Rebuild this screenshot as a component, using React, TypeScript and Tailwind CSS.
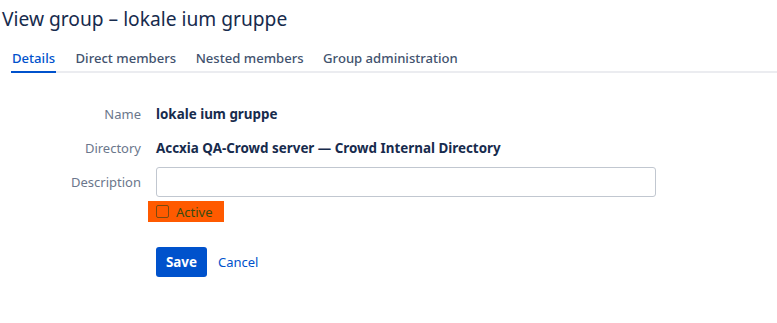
export default function App() {
  const tabs = ["Details", "Direct members", "Nested members", "Group administration"];

  return (
    <div className="w-[777px] h-[323px] bg-white text-[#172b4d] font-['Noto_Sans',sans-serif] overflow-hidden">
      <h1 className="pl-[2px] pt-[5px] text-[19.2px] leading-[28px] text-[#172b4d]">
        View group – lokale ium gruppe
      </h1>

      <div className="mt-[15px] ml-[11px] flex border-b-2 border-[#ebecf0]">
        {tabs.map((tab, i) => (
          <div
            key={tab}
            className={
              i === 0
                ? "mb-[-2px] border-b-2 border-[#0052cc] px-[1px] pb-[3px] text-[13.1px] leading-[20px] font-medium text-[#0052cc]"
                : "ml-[19.5px] pb-[3px] text-[13.1px] leading-[20px] font-medium text-[#42526e]"
            }
          >
            {tab}
          </div>
        ))}
      </div>

      <div className="mt-[30px] flex flex-col">
        <Row label="Name">
          <span className="font-bold text-[13.4px]">lokale ium gruppe</span>
        </Row>
        <div className="h-[13px]" />
        <Row label="Directory">
          <span className="font-bold text-[13.4px]">
            Accxia QA-Crowd server — Crowd Internal Directory
          </span>
        </Row>
        <div className="h-[9px]" />
        <Row label="Description">
          <input className="block h-[30px] w-[500px] rounded-[3px] border border-[#c1c7d0] bg-white outline-none" />
        </Row>

        <div className="ml-[148px] mt-[4px] flex h-[21px] w-[76px] items-center bg-[#ff5a00] pl-[8px] text-[13px] leading-[20px] text-[#3a4a10]">
          <span className="h-[13px] w-[13px] rounded-[2px] border border-[#7a4a10]" />
          <span className="ml-[7px]">Active</span>
        </div>

        <div className="ml-[156px] mt-[25px] flex items-center">
          <button className="h-[30px] w-[51px] rounded-[3px] bg-[#0052cc] text-[13.4px] font-bold text-white">
            Save
          </button>
          <span className="ml-[11px] text-[13px] leading-[20px] text-[#0052cc]">Cancel</span>
        </div>
      </div>
    </div>
  );
}

function Row({ label, children }: { label: string; children: React.ReactNode }) {
  return (
    <div className="flex items-center leading-[20px]">
      <div className="w-[141px] text-right text-[13px] text-[#6b778c]">{label}</div>
      <div className="ml-[15px]">{children}</div>
    </div>
  );
}
